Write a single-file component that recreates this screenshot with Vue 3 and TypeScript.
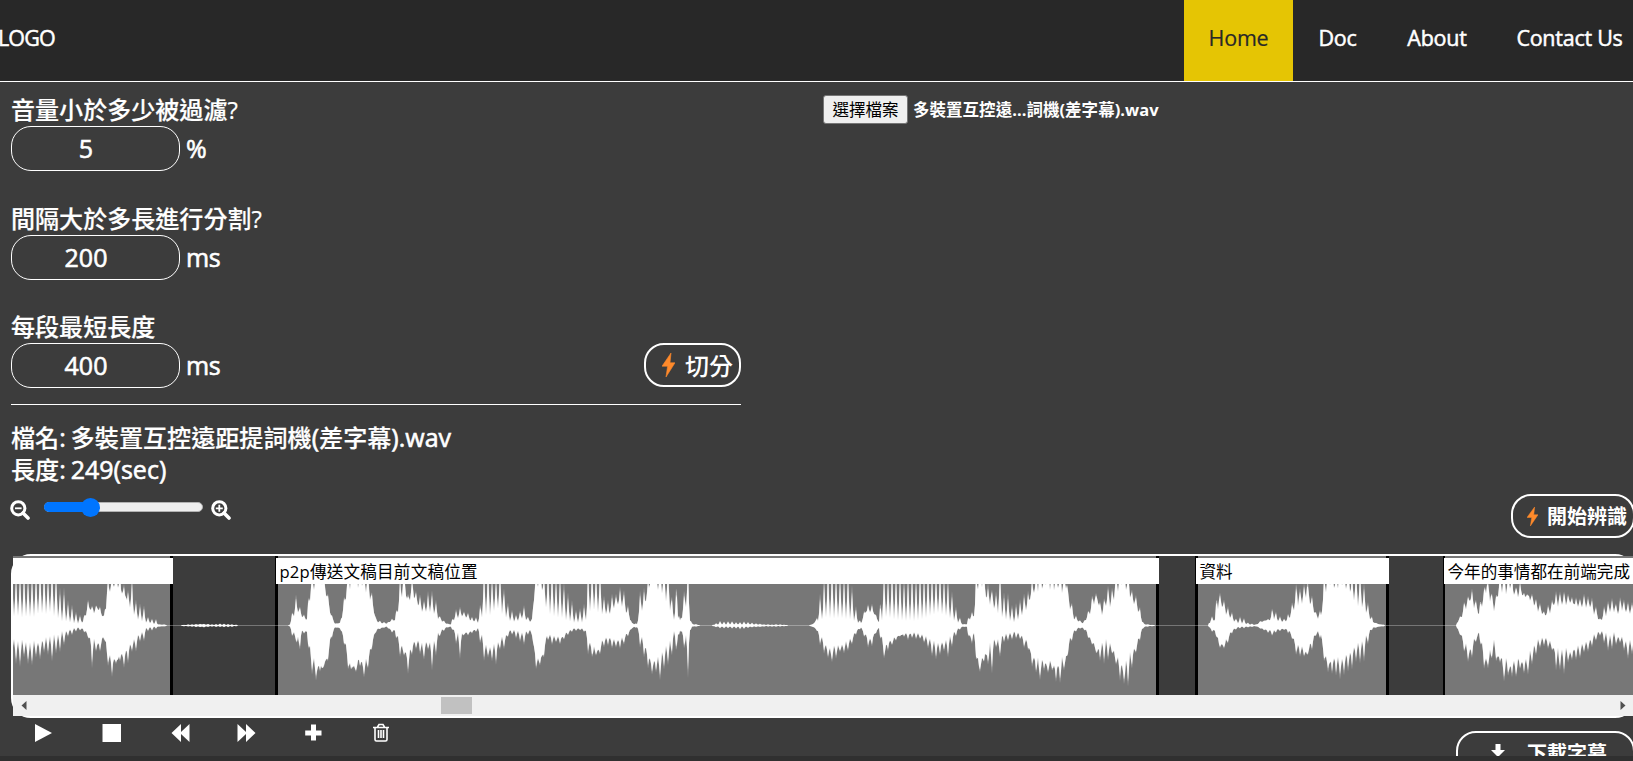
<script setup lang="ts">
import { ref } from 'vue'

interface Setting { label: string; value: string; unit: string }
interface Region { kind: string; text: string }

const links = [
  { name: 'Home', cls: 'home' },
  { name: 'Doc', cls: 'doc' },
  { name: 'About', cls: 'about' },
  { name: 'Contact Us', cls: 'contact' },
]
const settings = ref<Setting[]>([
  { label: '音量小於多少被過濾?', value: '5', unit: '%' },
  { label: '間隔大於多長進行分割?', value: '200', unit: 'ms' },
  { label: '每段最短長度', value: '400', unit: 'ms' },
])
const regions: Region[] = [
  { kind: 'r1', text: '' },
  { kind: 'r2', text: 'p2p傳送文稿目前文稿位置' },
  { kind: 'r3', text: '資料' },
  { kind: 'r4', text: '今年的事情都在前端完成' },
]

// Envelope samples: x, upper peak, upper valley, lower peak, lower valley
const envelope = `13 46 10 36 15;30 46 10 35 20;40 46 12 30 17;50 46 15 31 12;58 40 8 30 10;62 36 5 22 7;70 22 3 10 4;78 12 2 4 2;83 6 3 5 3;88 24 18 12 9;92 20 14 38 15;98 24 18 23 20;101 18 12 25 18;104 10 8 16 8;107 46 25 35 25;111 46 41 48 35;118 42 38 35 34;126 36 28 42 25;132 41 15 28 18;138 22 6 20 10;143 20 4 16 6;147 8 3 6 2;156 6 1 4 1;158 1 1 1 1;170 .5 .5 .5 .5;185 .7 .5 .7 .5;203 2 1 2 1;212 1 .5 1 .5;223 2 .5 2 .5;235 1 .4 1 .4;240 .4 .4 .4 .4;288 .4 .4 .4 .4;290 1 1 1 1;292 15 8 10 6;296 34 14 18 10;298 22 14 38 12;302 14 10 8 6;307 10 5 10 6;310 46 30 45 25;315 46 43 52 40;322 46 43 51 45;328 36 25 35 30;331 14 10 15 10;335 2 2 2 2;340 3 2 3 2;343 22 14 16 10;347 46 35 40 25;350 46 43 49 45;360 46 43 45 38;368 46 38 43 40;372 30 22 20 15;376 7 4 6 4;382 3 2 2 2;387 3 2 2 1;392 8 5 8 5;395 6 5 8 4;398 30 15 20 12;400 43 25 36 20;404 44 38 30 25;408 36 22 41 30;413 43 35 25 20;418 28 20 24 15;423 25 14 35 20;428 33 16 25 18;432 32 14 44 20;436 22 10 26 12;440 10 6 10 6;446 2 2 2 2;451 2 1 2 1;453 12 5 6 4;459 20 8 35 8;464 14 10 10 8;470 10 5 9 6;478 6 3 5 3;481 30 8 20 6;484 46 12 39 20;490 46 12 36 25;496 46 20 38 20;501 43 15 25 14;506 36 8 18 10;510 14 5 8 5;516 12 4 12 5;524 18 8 18 8;528 8 4 10 5;532 8 5 10 6;534 46 30 35 25;537 46 41 57 35;542 46 35 35 30;547 46 15 17 10;555 46 10 17 12;562 43 8 18 12;568 30 5 10 6;573 20 3 6 3;580 16 3 5 3;585 20 4 6 4;588 46 10 25 12;593 46 20 33 25;598 46 15 34 28;604 35 12 20 12;609 28 10 18 12;615 30 20 25 15;622 35 22 22 14;628 20 10 12 7;632 3 2 3 2;637 2 1 2 1;640 30 14 22 8;645 38 20 32 20;650 46 43 50 35;657 46 43 48 38;664 46 35 44 28;670 46 18 45 18;674 10 7 12 7;677 46 10 36 12;680 6 4 6 4;683 28 10 15 8;688 46 30 48 14;690 10 6 10 6;692 2 1 1 1;700 .6 .5 .6 .5;712 .6 .5 .6 .5;720 4 1 3 1;730 4 1 3 1;740 4 1 4 1;752 3 1 2 1;765 1 .6 1 .6;780 1 .5 1 .5;790 .5 .5 .5 .5;808 .5 .5 .5 .5;812 1 1 1 1;816 5 4 4 3;820 30 5 20 8;825 46 8 30 18;829 46 8 33 25;837 46 8 28 22;845 46 8 26 20;852 36 6 18 12;857 14 3 9 4;861 3 2 2 2;868 24 18 20 12;870 22 14 24 14;874 16 12 12 9;879 4 3 3 2;881 36 4 20 8;884 46 10 28 24;890 46 8 20 16;900 46 5 12 10;907 43 5 13 8;915 43 5 12 8;923 43 8 14 11;930 46 10 25 14;936 46 15 37 20;942 46 12 28 18;948 41 10 28 15;953 30 6 17 8;958 12 3 6 3;963 1 1 1 1;967 2 1 2 1;970 18 6 25 10;974 14 10 10 8;976 46 30 30 25;979 46 43 52 40;983 46 43 40 35;988 36 18 36 25;991 36 28 50 18;995 30 16 20 15;1000 44 14 30 18;1003 36 8 16 10;1010 28 5 14 8;1015 18 3 12 6;1022 24 10 16 10;1028 36 20 26 18;1033 44 35 50 35;1040 46 43 50 40;1048 46 43 45 40;1055 43 36 48 42;1061 46 42 55 42;1067 42 38 38 30;1070 30 20 20 15;1074 12 6 8 5;1079 6 4 3 2;1083 3 2 3 2;1087 10 8 10 6;1090 22 14 20 15;1093 36 22 20 18;1097 30 26 30 25;1102 20 12 30 20;1106 34 22 44 15;1112 38 22 30 24;1116 46 38 45 35;1121 46 42 52 40;1125 46 42 56 42;1129 44 38 52 35;1133 36 25 32 28;1138 28 15 25 15;1141 10 6 10 5;1144 2 1 2 1;1150 .8 .5 .8 .5;1158 .5 .5 .5 .5;1208 .5 .5 .5 .5;1211 10 4 5 3;1215 8 5 8 5;1217 38 14 15 10;1219 30 25 24 20;1223 30 20 26 22;1227 22 10 20 14;1231 14 7 10 6;1236 6 3 4 2;1241 10 2 3 1;1248 3 1 2 1;1256 1 .6 1 .6;1262 5 4 4 3;1270 8 6 8 5;1273 18 8 12 6;1277 10 5 6 4;1284 6 3 4 3;1289 12 6 8 4;1293 28 14 18 12;1297 43 20 35 20;1302 36 25 28 24;1307 42 30 32 28;1312 28 20 24 16;1316 12 8 10 6;1321 14 8 12 8;1324 44 30 38 28;1330 46 42 46 38;1336 46 42 45 36;1341 46 42 52 35;1348 44 38 44 30;1354 44 25 36 22;1360 42 20 38 18;1365 38 15 30 12;1369 20 8 12 6;1373 4 3 3 2;1380 1 1 1 1;1386 .5 .5 .5 .5;1456 .5 .5 .5 .5;1458 5 4 5 4;1462 16 10 15 12;1466 30 20 30 22;1470 36 26 38 25;1475 26 20 18 14;1479 14 10 8 7;1482 32 22 32 20;1486 43 35 46 36;1491 34 28 35 28;1494 22 16 22 16;1498 42 30 40 32;1503 44 38 47 38;1510 42 38 48 42;1516 38 34 46 40;1525 38 32 46 38;1530 34 30 40 30;1535 33 22 32 22;1540 20 14 20 14;1545 14 10 24 12;1550 20 14 22 18;1555 30 22 36 24;1559 32 24 46 30;1565 38 26 41 28;1570 32 24 40 28;1577 30 22 30 24;1583 30 20 28 20;1590 28 18 22 14;1595 20 12 18 10;1600 8 4 10 5;1605 20 10 18 8;1610 26 14 26 10;1614 26 16 15 8;1618 18 12 20 12;1622 36 16 18 12;1627 22 14 30 18;1634 20 12 26 14`
  .split(';').map(row => row.split(' ').map(Number))

// Deterministic jitter in 0..1, one value per tooth of the comb
function jitter(n: number): number {
  const v = Math.sin(n * 12.9898) * 43758.5453
  return v - Math.floor(v)
}

function wavePath(gain: number): string {
  const top: string[] = []
  const bottom: string[] = []
  let i = 0
  for (let x = 13; x <= 1633; x++) {
    while (i < envelope.length - 2 && envelope[i + 1][0] <= x) i++
    const a = envelope[i]
    const b = envelope[i + 1]
    const t = (x - a[0]) / (b[0] - a[0])
    const at = (k: number) => a[k] + (b[k] - a[k]) * t
    const tooth = [1, 0.45, 0, 0.4][x % 4] * gain
    const n = Math.floor((x + 2) / 4)
    const rise = (at(1) > 40 ? 1.1 : 0.85) + 0.35 * jitter(n)
    const fall = 0.82 + 0.3 * jitter(n + 700)
    const grain = 0.78 + 0.22 * jitter(x + 90)
    const quiet = at(1) < 0.65
    const high = at(2) * grain
    const low = at(4) * grain
    const up = quiet ? 0 : high + Math.max(0, at(1) * rise - high) * tooth
    const down = quiet ? 0 : low + Math.max(0, at(3) * fall * 1.06 - low) * tooth
    top.push(`${x - 13} ${(69.5 - up).toFixed(1)}`)
    bottom.unshift(`${x - 13} ${(69.5 + down).toFixed(1)}`)
  }
  return `M${top.join('L')}L${bottom.join('L')}Z`
}
const loud = wavePath(1)
const body = wavePath(0.8)
</script>

<template>
  <div class="page">
    <header class="bar">
      <div class="logo">LOGO</div>
      <nav>
        <a v-for="l in links" :key="l.name" :class="l.cls">{{ l.name }}</a>
      </nav>
    </header>

    <main>
      <div class="top">
        <section class="settings">
          <div v-for="s in settings" :key="s.label" class="setting">
            <label>{{ s.label }}</label>
            <div class="row">
              <input v-model="s.value" type="text">
              <span class="unit">{{ s.unit }}</span>
            </div>
          </div>
          <button class="pill split">
            <svg width="13" height="24" viewBox="0 0 13 24"><path d="M9 0L0 13.2H5.6L4 24L13 9.8H8Z" fill="#ff8a2b" stroke="#ff8a2b" stroke-width=".6" /></svg>
            <span>切分</span>
          </button>
        </section>
        <section class="file">
          <button class="choose">選擇檔案</button>
          <span>多裝置互控遠...詞機(差字幕).wav</span>
        </section>
      </div>

      <section class="info">
        <div class="line">檔名<i class="gap">: </i>多裝置互控遠距提詞機<i>(</i>差字幕<i>).wav</i></div>
        <div class="line">長度<i class="gap">: </i><i>249(sec)</i></div>
      </section>

      <div class="tools">
        <svg class="lens" width="20" height="20" viewBox="0 0 20 20" fill="none" stroke="#fff">
          <circle cx="8.3" cy="8.3" r="6.6" stroke-width="3" /><path d="M13 13L18 18" stroke-width="3.6" stroke-linecap="round" /><path d="M5 8.3H11.6" stroke-width="1.8" />
        </svg>
        <div class="slider"><div class="fill"></div><div class="knob"></div></div>
        <svg class="lens" width="20" height="20" viewBox="0 0 20 20" fill="none" stroke="#fff">
          <circle cx="8.3" cy="8.3" r="6.6" stroke-width="3" /><path d="M13 13L18 18" stroke-width="3.6" stroke-linecap="round" /><path d="M4.8 8.3H11.8M8.3 4.8V11.8" stroke-width="1.8" />
        </svg>
        <button class="pill start">
          <svg width="11" height="19" viewBox="0 0 13 24" preserveAspectRatio="none"><path d="M9 0L0 13.2H5.6L4 24L13 9.8H8Z" fill="#ff8a2b" stroke="#ff8a2b" stroke-width=".6" /></svg>
          <span>開始辨識</span>
        </button>
      </div>

      <section class="panel">
        <div class="track">
          <div v-for="r in regions" :key="r.kind" class="region" :class="r.kind">
            <div class="caption">{{ r.text }}</div>
          </div>
          <svg class="wave" width="1620" height="139" viewBox="0 0 1620 139">
            <rect x="0" y="69" width="1620" height="1" fill="#fff" fill-opacity=".3" />
            <path :d="loud" fill="#fff" fill-opacity=".5" />
            <path :d="body" fill="#fff" />
          </svg>
        </div>
        <div class="scroll">
          <svg width="6" height="9" viewBox="0 0 6 9"><path d="M5.5 0V9L.5 4.5Z" fill="#505050" /></svg>
          <div class="thumb"></div>
          <svg class="end" width="6" height="9" viewBox="0 0 6 9"><path d="M.5 0V9L5.5 4.5Z" fill="#505050" /></svg>
        </div>
      </section>

      <div class="controls">
        <svg width="376" height="20" viewBox="0 0 376 20" fill="#fff">
          <path d="M0 1L17 10L0 19Z" />
          <path d="M67.5 1H86V19H67.5Z" />
          <path d="M136.5 10L146 1V9L154.5 1V19L146 11V19Z" />
          <path d="M202.5 1L211 9V1L220.5 10L211 19V11L202.5 19Z" />
          <path d="M276 1.5H281V7.5H286.5V12.5H281V17.5H276V12.5H270.2V7.5H276Z" />
          <path d="M338 4.5H354M342.5 4L344 1.5H348L349.5 4M340 5V16.5Q340 18 341.5 18H350.5Q352 18 352 16.5V5M343.5 7V15M346 7V15M348.500 7V15" fill="none" stroke="#fff" stroke-width="1.6" />
        </svg>
        <button class="pill download">
          <svg width="18" height="18" viewBox="0 0 18 18" fill="#fff"><path d="M6.5 0H11.5V6H16L9 13L2 6H6.5ZM0 12H4L9 16L14 12H18V18H0Z" /></svg>
          <span>下載字幕</span>
        </button>
      </div>
    </main>
    <footer></footer>
  </div>
</template>

<style>
html, body { margin: 0; overflow: hidden; background: #3c3c3c; }
</style>

<style scoped>
* { box-sizing: border-box; }
.page {
  width: 100vw; height: 761px; overflow: hidden; display: flex; flex-direction: column;
  background: #3c3c3c; color: #fff;
  font-family: "Open Sans", "Noto Sans CJK TC", sans-serif; font-weight: 500;
}
button { font: inherit; color: inherit; padding: 0; white-space: nowrap; }
svg { display: block; flex: none; }
.bar { height: 82px; flex: none; display: flex; justify-content: space-between; background: #282828; border-bottom: 1px solid #fff; font-size: 21.5px; line-height: 75px; -webkit-text-stroke: .5px currentColor; }
.logo { margin-left: -2px; letter-spacing: -.9px; }
nav { display: flex; width: 449px; flex: none; }
nav a { flex: none; text-align: center; white-space: nowrap; letter-spacing: -.25px; }
.home { width: 109px; background: #e5c504; color: #282828; font-weight: 400; -webkit-text-stroke: .2px currentColor; }
.doc { width: 89px; }
.about { width: 110px; }
.contact { width: 155px; }
main { height: 674px; flex: none; overflow: hidden; padding-left: 11px; display: flex; flex-direction: column; }
.top { display: flex; height: 323px; flex: none; }
.settings { position: relative; width: 730px; border-bottom: 1px solid #fff; padding-top: 13px; }
.setting { height: 108.5px; }
label { display: block; font-size: 24.05px; line-height: 30px; height: 31px; -webkit-text-stroke: .2px #fff; }
.row { display: flex; align-items: center; height: 45px; }
input { width: 169px; height: 45px; border: 1px solid #fff; border-radius: 20px; background: none; color: #fff; font: inherit; font-size: 25px; text-align: center; padding: 0 20px 1px 1px; outline: none; -webkit-text-stroke: .6px #fff; }
.unit { font-size: 25px; line-height: 45px; height: 45px; margin-left: 6px; letter-spacing: -.5px; -webkit-text-stroke: .6px #fff; }
.pill { display: flex; align-items: center; border: 2px solid #fff; border-radius: 20px; background: #3c3c3c; height: 44px; flex: none; }
.pill span { margin-top: -2px; }
.split { position: absolute; right: 0; bottom: 17px; width: 97px; padding-left: 16px; gap: 10px; font-size: 24px; font-weight: 500; }
.file { display: flex; align-items: center; height: 29px; margin: 13px 0 0 82px; font-size: 16.5px; }
.file span { margin: -2px 0 0 5px; font-weight: 700; white-space: nowrap; letter-spacing: .03px; }
.choose { width: 85px; height: 29px; border: 1px solid #767676; border-radius: 3px; background: #efefef; color: #000; font-weight: 400; line-height: 25px; }
.info { padding-top: 16px; font-size: 24.1px; height: 89px; flex: none; -webkit-text-stroke: .2px #fff; }
.line { height: 32px; line-height: 32px; white-space: pre; }
.line i { font-style: normal; font-size: 25px; -webkit-text-stroke: .6px #fff; }
.line .gap { display: inline-block; width: 11.5px; }
.tools { display: flex; height: 60px; flex: none; margin-left: -1px; width: 1625px; }
.lens { margin-top: 6px; }
.slider { position: relative; width: 159px; height: 10px; margin: 8px 8px 0 14px; border: 1px solid #b2b2b2; border-radius: 5px; background: #efefef; }
.fill { width: 46px; height: 10px; margin: -1px; border-radius: 5px; background: #0075ff; }
.knob { position: absolute; left: 36px; top: -5.5px; width: 19px; height: 19px; border-radius: 50%; background: #0075ff; }
.start { margin-left: auto; width: 124px; padding-left: 14px; gap: 9px; font-size: 20px; font-weight: 700; }
.panel { width: 1624px; height: 164px; flex: none; border: 2px solid #fff; border-radius: 20px; }
.track { position: relative; width: 1621px; height: 139px; background: #3c3c3c; overflow: hidden; }
.region { position: absolute; top: 0; height: 139px; padding-top: 2px; background: #777; border: solid #000; border-width: 0 3px; }
.r1 { left: 0; width: 160px; border-left: 0; }
.r2 { left: 262px; width: 884px; }
.r3 { left: 1182px; width: 194px; }
.r4 { left: 1430px; width: 200px; border-left-width: 2px; }
.caption { position: relative; z-index: 2; height: 26px; margin: 0 -3px 0 -2px; padding-left: 3.5px; background: #fff; color: #000; font-size: 16.6px; line-height: 27px; font-weight: 400; white-space: nowrap; }
.r1 .caption { margin-left: 0; }
.r2 .caption { letter-spacing: .2px; }
.r4 .caption { margin-left: -1px; }
.wave { position: absolute; left: 0; top: 0; clip-path: inset(28px 0 0 0); }
.scroll { position: relative; display: flex; align-items: center; width: 1621px; height: 21px; background: #f0f0f0; padding: 0 8px; }
.thumb { width: 31px; height: 17px; margin-left: 414px; background: #c1c1c1; }
.end { margin-left: auto; }
.controls { display: flex; justify-content: space-between; width: 1624px; height: 60px; padding: 5px 0 0 24px; }
.download { margin-top: 8px; width: 179px; padding-left: 31px; gap: 20px; font-size: 20px; font-weight: 700; }
footer { height: 5px; flex: none; background: #303030; }
</style>
